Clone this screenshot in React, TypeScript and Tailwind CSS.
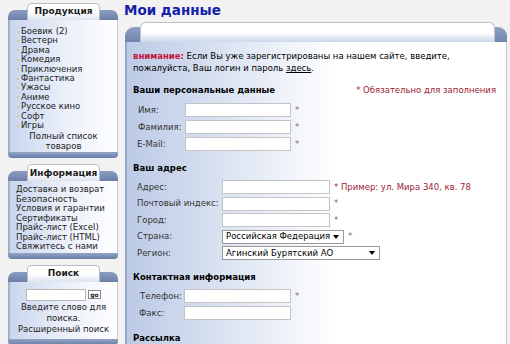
import React from "react";

const FONT = { fontFamily: '"DejaVu Sans", Verdana, sans-serif' };

const SideBox = ({ title, children }: { title: string; children: React.ReactNode }) => (
  <div className="w-[110px]">
    <div className="flex items-end h-[17px]">
      <div className="w-[19px] h-[10px] rounded-tl-[7px] bg-gradient-to-b from-[#8a9cc0] to-[#6c80a8]" />
      <div className="flex-1 h-[17px] rounded-t-[5px] border border-b-0 border-[#b4bccb] bg-gradient-to-b from-white via-white to-[#dde3ee] flex items-center justify-center text-[9px] font-bold text-[#1c1c1c]">
        {title}
      </div>
      <div className="w-[18px] h-[10px] rounded-tr-[7px] bg-gradient-to-b from-[#8a9cc0] to-[#6c80a8]" />
    </div>
    <div className="border-l-2 border-l-[#9fafcc] border-r border-r-[#c9d0dc] bg-gradient-to-r from-[#cad6ee] via-[#eaeff9] to-white">
      {children}
    </div>
    <div className="h-[6px] rounded-b-[4px] bg-gradient-to-b from-[#93a4c6] to-[#6a7ea6]" />
  </div>
);

const Item = ({ children }: { children: React.ReactNode }) => (
  <div className="flex items-center h-[9.4px] leading-[9.4px]">
    <span className="w-[2px] h-[2px] bg-[#cfc69c] mr-[2px] ml-[7px]" />
    <span>{children}</span>
  </div>
);

const Field = ({ w }: { w: number }) => (
  <div className="h-[14px] border border-[#c4c4c4] bg-white shrink-0" style={{ width: w }} />
);

const Select = ({ w, text }: { w: number; text: string }) => (
  <div className="h-[14px] border border-[#9a9a9a] bg-white flex items-center justify-between pl-[3px] pr-[4px] text-[8.5px] text-black shrink-0" style={{ width: w }}>
    <span>{text}</span>
    <span className="w-0 h-0 border-l-[3px] border-r-[3px] border-t-[4px] border-l-transparent border-r-transparent border-t-black" />
  </div>
);

const Star = ({ children }: { children?: React.ReactNode }) => (
  <span className={`ml-[4px] whitespace-nowrap ${children ? "text-[#9b2335]" : "text-[#7a6a70]"}`}>* {children}</span>
);

const Row = ({ label, lw, pl, children }: { label: string; lw: number; pl: number; children: React.ReactNode }) => (
  <div className="flex items-center">
    <span className="whitespace-nowrap text-[#333] shrink-0" style={{ width: lw, paddingLeft: pl }}>{label}</span>
    {children}
  </div>
);

export default function App() {
  const products = ["Боевик (2)", "Вестерн", "Драма", "Комедия", "Приключения", "Фантастика", "Ужасы", "Аниме", "Русское кино", "Софт", "Игры"];
  const info = ["Доставка и возврат", "Безопасность", "Условия и гарантии", "Сертификаты", "Прайс-лист (Excel)", "Прайс-лист (HTML)", "Свяжитесь с нами"];

  return (
    <div className="w-[510px] h-[344px] overflow-hidden bg-[#f2f2f2] flex text-[8.5px] text-[#222]" style={FONT}>
      {/* sidebar */}
      <div className="pl-[8px] pt-[3px] flex flex-col gap-[6px] shrink-0">
        <SideBox title="Продукция">
          <div className="pt-[7px] pb-[1px]">
            {products.map((p) => (
              <Item key={p}>{p}</Item>
            ))}
            <div className="text-center leading-[10px] mt-[1px] px-[16px]">Полный список товаров</div>
          </div>
        </SideBox>
        <SideBox title="Информация">
          <div className="pt-[4px] pb-[1px] pl-[6px] leading-[9.5px]">
            {info.map((p) => (
              <div key={p}>{p}</div>
            ))}
          </div>
        </SideBox>
        <SideBox title="Поиск">
          <div className="pt-[7px] pb-[4px] flex flex-col items-center">
            <div className="flex items-center gap-[2px]">
              <div className="w-[60px] h-[12px] border border-[#b8b8b8] bg-white" />
              <div className="w-[13px] h-[9px] border border-[#888] bg-white text-[6px] font-bold flex items-center justify-center leading-none">go</div>
            </div>
            <div className="text-center leading-[11px] mt-[1px] px-[10px]">Введите слово для поиска.</div>
            <div className="text-center leading-[11px]">Расширенный поиск</div>
          </div>
        </SideBox>
      </div>

      {/* main */}
      <div className="flex-1 min-w-0 ml-[6px] pr-[3px]">
        <div className="h-[22px] pt-[2px] text-[13.5px] font-bold text-[#1420a8] leading-[16px]">Мои данные</div>
        <div className="ml-[1px]">
          <div className="flex items-end h-[20px]">
            <div className="w-[15px] h-[15px] rounded-tl-[9px] bg-gradient-to-b from-[#8ea0c2] to-[#7085ad]" />
            <div className="flex-1 h-[20px] rounded-t-[6px] border border-b-0 border-[#bcc4d2] bg-gradient-to-b from-white via-white to-[#cbd7ea]" />
            <div className="w-[12px] h-[15px] rounded-tr-[9px] bg-gradient-to-b from-[#8ea0c2] to-[#7085ad]" />
          </div>
          <div className="h-[302px] border-l-2 border-l-[#93a4c4] border-r border-r-[#c8cbd4] bg-gradient-to-r from-[#bccae6] via-white via-[55%] to-white pl-[6px] pr-[10px] pt-[8px] text-black">
            <div className="leading-[12px]">
              <span className="font-bold text-[#c3123c]">внимание:</span> Если Вы уже зарегистрированы на нашем сайте, введите,
              <br />
              пожалуйста, Ваш логин и пароль <span className="underline">здесь</span>.
            </div>

            <div className="mt-[10px] flex justify-between items-center leading-[12px]">
              <span className="font-bold">Ваши персональные данные</span>
              <span className="text-[#9b2335]">* Обязательно для заполнения</span>
            </div>
            <div className="mt-[7px] flex flex-col gap-[3px]">
              <Row label="Имя:" lw={52} pl={5}><Field w={106} /><Star /></Row>
              <Row label="Фамилия:" lw={52} pl={5}><Field w={106} /><Star /></Row>
              <Row label="E-Mail:" lw={52} pl={4}><Field w={106} /><Star /></Row>
            </div>

            <div className="mt-[11px] font-bold leading-[12px]">Ваш адрес</div>
            <div className="mt-[6px] flex flex-col gap-[2.5px]">
              <Row label="Адрес:" lw={89} pl={4}><Field w={108} /><Star>Пример: ул. Мира 340, кв. 78</Star></Row>
              <Row label="Почтовый индекс:" lw={89} pl={4}><Field w={108} /><Star /></Row>
              <Row label="Город:" lw={89} pl={4}><Field w={108} /><Star /></Row>
              <Row label="Страна:" lw={89} pl={4}><Select w={122} text="Российская Федерация" /><Star /></Row>
              <Row label="Регион:" lw={89} pl={4}><Select w={158} text="Агинский Бурятский АО" /></Row>
            </div>

            <div className="mt-[11px] font-bold leading-[12px]">Контактная информация</div>
            <div className="mt-[6px] flex flex-col gap-[3px]">
              <Row label="Телефон:" lw={51} pl={7}><Field w={107} /><Star /></Row>
              <Row label="Факс:" lw={51} pl={6}><Field w={107} /></Row>
            </div>

            <div className="mt-[12px] font-bold leading-[12px]">Рассылка</div>
          </div>
        </div>
      </div>
    </div>
  );
}
